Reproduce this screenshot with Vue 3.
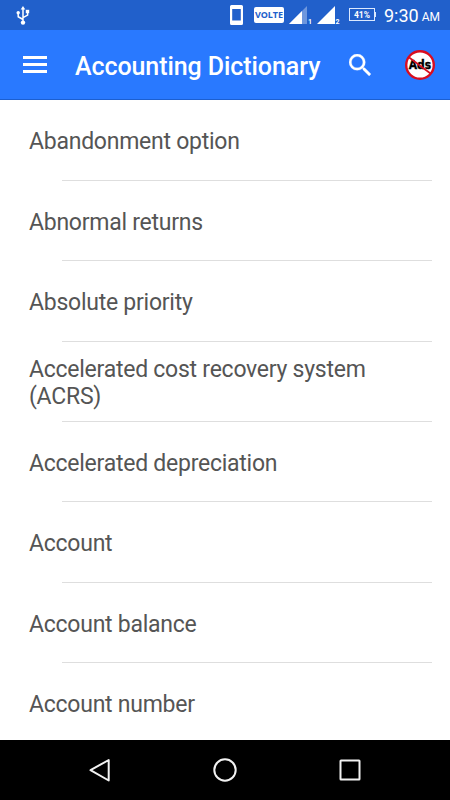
<template>
  <div class="screen">
    <div class="status-bar">
      <svg class="usb" width="14" height="20" viewBox="0 0 14 20">
        <path d="M7 2v14M7 13.5L2.2 10.7V7M7 11.7l4.6-2.6V6.5" fill="none" stroke="#fff" stroke-width="1.5" />
        <path d="M7 0l2.3 3.6H4.7z" fill="#fff" />
        <circle cx="7" cy="16.6" r="2.2" fill="#fff" />
        <circle cx="2.2" cy="6.8" r="1.7" fill="#fff" />
        <path d="M9.8 3.8h3.4v3.4H9.8z" fill="#fff" />
      </svg>
      <div class="status-icons">
        <svg class="phone" width="13" height="20" viewBox="0 0 13 20">
          <path fill="#fff" fill-rule="evenodd" d="M1.5 0h10Q13 0 13 1.5v17q0 1.5-1.5 1.5h-10Q0 20 0 18.5v-17Q0 0 1.5 0zM2.2 4v11.5h8.6V4z" />
        </svg>
        <span class="volte">VOLTE</span>
        <svg class="signal" width="23" height="20" viewBox="0 0 23 20">
          <path d="M18 0v18H0z" fill="#fff" opacity=".35" />
          <path d="M13 5v13H0z" fill="#fff" />
          <text x="19" y="18">1</text>
        </svg>
        <svg class="signal" width="24" height="20" viewBox="0 0 24 20">
          <path d="M18 0v18H0z" fill="#fff" />
          <text x="18.5" y="18">2</text>
        </svg>
        <span class="battery">41%</span>
        <span class="clock">9:30</span>
        <span class="period">AM</span>
      </div>
    </div>

    <header class="toolbar">
      <button class="icon-btn menu" aria-label="Menu">
        <span></span>
        <span></span>
        <span></span>
      </button>
      <h1>Accounting Dictionary</h1>
      <button class="icon-btn search" aria-label="Search">
        <svg width="22" height="22" viewBox="3 3 17.5 17.5">
          <path fill="#fff" stroke="#fff" stroke-width=".2" d="M15.5 14h-.79l-.28-.27A6.471 6.471 0 0 0 16 9.5 6.5 6.5 0 1 0 9.5 16c1.61 0 3.09-.59 4.23-1.57l.27.28v.79l5 4.99L20.49 19l-4.99-5zm-6 0C7.01 14 5 11.99 5 9.5S7.01 5 9.5 5 14 7.01 14 9.5 11.99 14 9.5 14z" />
        </svg>
      </button>
      <button class="icon-btn ads" aria-label="Remove ads">
        <svg width="32" height="32" viewBox="0 0 32 32">
          <circle cx="16" cy="16" r="13.8" fill="#fff" stroke="#d90d20" stroke-width="2.4" />
          <text x="16" y="20" text-anchor="middle" textLength="22.5" lengthAdjust="spacingAndGlyphs">Ads</text>
          <path d="M4.5 8L26.5 24.5" stroke="#d90d20" stroke-width="1.7" />
        </svg>
      </button>
    </header>

    <ul class="terms">
      <li v-for="term in terms" :key="term">
        <span>{{ term }}</span>
      </li>
    </ul>

    <nav class="nav-bar">
      <svg width="24" height="26" viewBox="0 0 24 26">
        <path d="M20.7 3v20.5L2.5 13.2z" />
      </svg>
      <svg width="26" height="26" viewBox="0 0 26 26">
        <circle cx="13" cy="13" r="10.7" />
      </svg>
      <svg width="24" height="26" viewBox="0 0 24 26">
        <rect x="2.5" y="3.5" width="19" height="19" rx=".5" />
      </svg>
    </nav>
  </div>
</template>

<script setup>
const terms = [
  'Abandonment option',
  'Abnormal returns',
  'Absolute priority',
  'Accelerated cost recovery system (ACRS)',
  'Accelerated depreciation',
  'Account',
  'Account balance',
  'Account number'
];
</script>

<style>
body {
  margin: 0;
}
</style>

<style scoped>
.screen {
  width: 450px;
  height: 800px;
  display: flex;
  flex-direction: column;
  overflow: hidden;
  background: #fff;
  font-family: Roboto, sans-serif;
}

.status-bar {
  height: 30px;
  flex: none;
  display: flex;
  justify-content: space-between;
  align-items: flex-start;
  box-sizing: border-box;
  padding: 6px 10px 0 16px;
  background: #2160cb;
  color: #fff;
}

.status-icons {
  display: flex;
  align-items: flex-start;
}

.phone {
  margin-top: -1px;
}

.volte {
  box-sizing: border-box;
  width: 30px;
  height: 16px;
  margin: 1px 0 0 11px;
  border-radius: 2px;
  background: #fff;
  color: #2160cb;
  font-family: "Noto Sans", sans-serif;
  font-size: 9px;
  font-weight: 700;
  line-height: 16px;
  text-align: center;
}

.signal {
  margin-left: 5px;
  overflow: visible;
}

.signal text {
  fill: #fff;
  font-size: 7px;
  font-weight: 700;
}

.battery {
  position: relative;
  box-sizing: border-box;
  width: 26px;
  height: 13px;
  margin: 2px 0 0 8px;
  border: 1px solid #dbe9ff;
  font-size: 8.5px;
  font-weight: 700;
  line-height: 12px;
  text-align: center;
}

.battery::after {
  content: '';
  position: absolute;
  top: 3px;
  right: -2px;
  width: 1px;
  height: 5px;
  background: #dbe9ff;
}

.clock {
  margin-left: 9px;
  font-size: 18px;
  line-height: 20px;
}

.period {
  margin-left: 3px;
  font-size: 12px;
  line-height: 23px;
}

.toolbar {
  height: 70px;
  flex: none;
  display: flex;
  align-items: center;
  box-sizing: border-box;
  padding: 0 14px 0 23px;
  border-bottom: 1px solid #1c5fd0;
  background: #2979ff;
  color: #fff;
}

.icon-btn {
  padding: 0;
  border: none;
  background: none;
}

.icon-btn svg {
  display: block;
}

.menu {
  display: flex;
  flex-direction: column;
  gap: 4.3px;
  width: 24px;
}

.menu span {
  height: 2.5px;
  background: #fff;
}

h1 {
  width: 246px;
  margin: 5px 0 0 28px;
  font-size: 25px;
  font-weight: 500;
  letter-spacing: -0.08px;
  line-height: 30px;
  white-space: nowrap;
}

.search {
  margin: 0 0 0 28px;
}

.ads {
  margin: 1px 0 0 auto;
}

.ads text {
  stroke: #000;
  stroke-width: 0.4px;
  font-family: "DejaVu Sans", sans-serif;
  font-size: 11.5px;
  font-weight: 700;
}

.terms {
  flex: 1;
  min-height: 0;
  overflow: hidden;
  margin: 0;
  padding: 0.64px 18px 0 29px;
  list-style: none;
}

.terms li {
  box-sizing: border-box;
  height: 80.36px;
  display: flex;
  flex-direction: column;
}

.terms li::after {
  content: '';
  height: 1px;
  flex: none;
  margin-left: 33px;
  background: #dedede;
}

.terms span {
  flex: 1;
  display: flex;
  align-items: center;
  max-width: 370px;
  padding-top: 4.5px;
  color: #555;
  font-size: 23px;
  letter-spacing: -0.25px;
  line-height: 26.4px;
}

.nav-bar {
  height: 60px;
  flex: none;
  display: flex;
  justify-content: space-between;
  align-items: center;
  box-sizing: border-box;
  padding: 0 88px;
  background: #000;
}

.nav-bar svg {
  fill: none;
  stroke: #f2f2f2;
  stroke-width: 2;
  stroke-linejoin: round;
}
</style>
